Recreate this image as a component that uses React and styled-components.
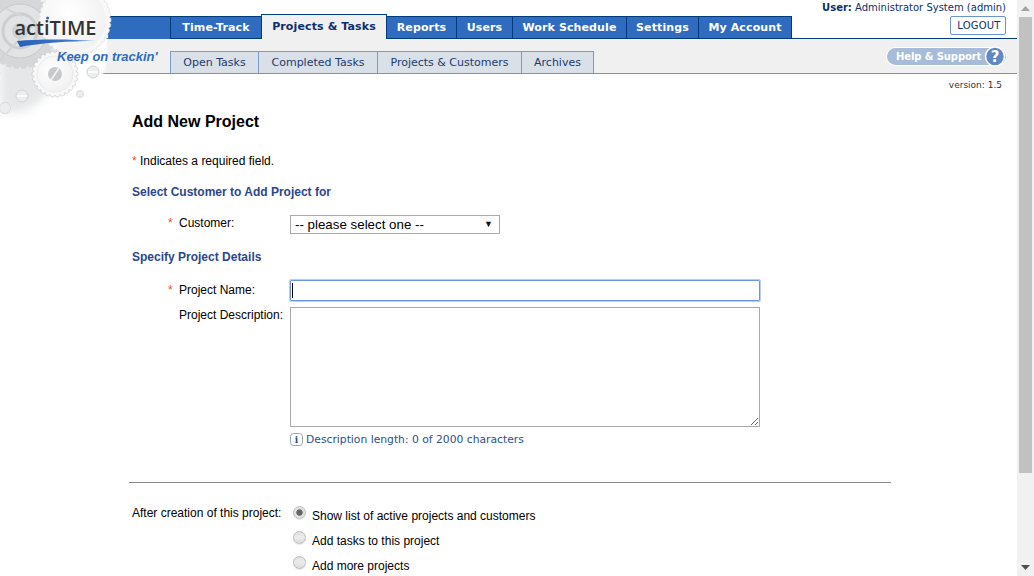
import React from "react";
import styled, { createGlobalStyle } from "styled-components";

const Global = createGlobalStyle`
  html, body { overflow: hidden; }
  body { margin: 0; background: #fff; font-family: "Liberation Sans", Arial, sans-serif; font-size: 12px; color: #000; }
`;

const Page = styled.div`
  position: relative;
  box-sizing: border-box;
  height: 576px;
  padding-right: 17px;
  overflow: hidden;
`;

const Scrollbar = styled.div`
  position: fixed;
  top: 0;
  right: 0;
  bottom: 0;
  width: 17px;
  z-index: 5;
  display: flex;
  flex-direction: column;
  background: #f1f1f1;
`;

const ScrollButton = styled.div`
  height: 17px;
  display: flex;
  align-items: center;
  justify-content: center;
`;

const ScrollTrack = styled.div`
  flex: 1;
  padding: 0 2px;
`;

const ScrollThumb = styled.div`
  height: 456px;
  background: #c1c1c1;
`;

const TopBar = styled.header`
  position: relative;
  height: 39px;
  box-sizing: border-box;
  padding-left: 108px;
  display: flex;
  align-items: flex-end;
  border-bottom: 1px solid #003a7c;
`;

const Nav = styled.nav`
  display: flex;
  align-items: flex-end;
  padding-left: 62px;
  height: 23px;
  margin-bottom: -1px;
  background: #2f6cc0;
  border-top: 1px solid #003a7c;
  box-sizing: border-box;
`;

const Tab = styled.a`
  box-sizing: border-box;
  width: ${p => p.$w}px;
  height: 23px;
  display: flex;
  align-items: center;
  justify-content: center;
  font-family: "DejaVu Sans", Verdana, sans-serif;
  font-weight: bold;
  font-size: 11px;
  letter-spacing: 0.12px;
  color: #fff;
  background: #2f6cc0;
  border: 1px solid #003a7c;
  border-width: 1px 1px 1px ${p => (p.$first ? "1px" : 0)};
`;

const ActiveTab = styled(Tab)`
  height: 25px;
  margin-left: -1px;
  padding-bottom: 1px;
  color: #0d2f6d;
  background: #f0f0f0;
  border-width: 1px 1px 0 1px;
`;

const UserArea = styled.div`
  position: absolute;
  right: 11px;
  top: 2px;
  display: flex;
  flex-direction: column;
  align-items: flex-end;
  gap: 3px;
`;

const UserLine = styled.div`
  font-family: "DejaVu Sans", Verdana, sans-serif;
  font-size: 10px;
  line-height: 11px;
  color: #0d2f6d;
  b { font-weight: bold; }
`;

const Logout = styled.button`
  box-sizing: border-box;
  width: 56px;
  height: 19px;
  padding: 0 0 0 2px;
  background: #fff;
  border: 1px solid #6d94cc;
  border-radius: 2px;
  font-family: "DejaVu Sans", Verdana, sans-serif;
  font-size: 10px;
  letter-spacing: 0.2px;
  color: #0d2f6d;
`;

const SubBar = styled.div`
  position: relative;
  height: 35px;
  box-sizing: border-box;
  background: #f0f0f0;
  border-bottom: 1px solid #6d94cc;
  display: flex;
  align-items: flex-end;
  padding-left: 57px;
`;

const Slogan = styled.div`
  position: relative;
  z-index: 2;
  align-self: flex-start;
  width: 113px;
  margin-top: 9px;
  font: italic bold 13px/17px "Liberation Sans", Arial, sans-serif;
  color: #2f6cc0;
  white-space: nowrap;
`;

const SubTabs = styled.div`
  display: flex;
  height: 22px;
`;

const SubTab = styled.a`
  box-sizing: border-box;
  width: ${p => p.$w}px;
  display: flex;
  align-items: center;
  justify-content: center;
  background: #d9e0e8;
  border: 1px solid #7a9bcf;
  border-width: 1px 1px 0 ${p => (p.$first ? "1px" : 0)};
  font-family: "DejaVu Sans", Verdana, sans-serif;
  font-size: 11px;
  color: #1d3a6e;
`;

const HelpPill = styled.div`
  position: absolute;
  right: 11px;
  top: 9px;
  width: 119px;
  height: 17px;
  box-sizing: border-box;
  padding-left: 9px;
  display: flex;
  align-items: center;
  border-radius: 9px;
  background: #a7bcd9;
  box-shadow: 0 0 0 1px #fff;
  font-family: "DejaVu Sans", Verdana, sans-serif;
  font-weight: bold;
  font-size: 10px;
  letter-spacing: -0.1px;
  color: #fff;
  svg { position: absolute; right: 0; top: -2px; }
`;

const VersionLine = styled.div`
  height: 22px;
  padding-right: 15px;
  text-align: right;
  font-family: "DejaVu Sans", Verdana, sans-serif;
  font-size: 9px;
  line-height: 22px;
  color: #333;
`;

const Main = styled.main`
  width: 762px;
  margin-left: 129px;
`;

const Title = styled.h1`
  margin: 16px 0 0 3px;
  font-size: 16px;
  line-height: 20px;
  font-weight: bold;
`;

const Note = styled.p`
  margin: 22px 0 0 3px;
  font-size: 12px;
  line-height: 14px;
`;

const Star = styled.span`
  color: #e8501e;
`;

const Section = styled.h2`
  margin: ${p => p.$mt}px 0 0 3px;
  font-size: 12px;
  line-height: 14px;
  font-weight: bold;
  color: #2b4690;
`;

const FieldRow = styled.div`
  display: grid;
  grid-template-columns: 161px auto;
  margin-top: ${p => p.$mt}px;
  align-items: start;
`;

const FieldLabel = styled.label`
  display: flex;
  padding-top: ${p => p.$pt || 0}px;
  padding-left: 50px;
  font-size: 12px;
  line-height: 14px;
  white-space: nowrap;
  ${Star} { position: absolute; margin-left: -11px; }
`;

const SelectWrap = styled.div`
  position: relative;
  width: 210px;
  &::after {
    content: "▼";
    position: absolute;
    right: 7px;
    top: 3px;
    font-size: 9px;
    line-height: 12px;
    color: #111;
    pointer-events: none;
  }
`;

const Select = styled.select`
  appearance: none;
  box-sizing: border-box;
  display: block;
  width: 210px;
  height: 19px;
  padding: 0 0 0 4px;
  border: 1px solid #a9a9a9;
  border-radius: 0;
  background: #fff;
  font: 13.333px "Liberation Sans", Arial, sans-serif;
  color: #000;
`;

const InputWrap = styled.div`
  position: relative;
  width: 470px;
`;

const TextInput = styled.input`
  box-sizing: border-box;
  display: block;
  width: 470px;
  height: 21px;
  padding: 0;
  border: 1px solid #6a95e0;
  outline: 1px solid #b7cdf3;
  outline-offset: 0;
  border-radius: 1px;
`;

const Caret = styled.span`
  position: absolute;
  left: 2px;
  top: 3px;
  width: 1px;
  height: 15px;
  background: #000;
`;

const TextArea = styled.textarea`
  box-sizing: border-box;
  display: block;
  width: 470px;
  height: 120px;
  padding: 2px;
  border: 1px solid #a9a9a9;
  border-radius: 0;
  outline: none;
`;

const InfoLine = styled.div`
  display: flex;
  align-items: center;
  gap: 3px;
  margin-top: 6px;
  height: 13px;
  font-family: "DejaVu Sans", Verdana, sans-serif;
  font-size: 10.75px;
  color: #2b5090;
`;

const Rule = styled.hr`
  margin: 36px 0 0;
  border: 0;
  height: 1px;
  background: #888;
`;

const AfterRow = styled.div`
  display: grid;
  grid-template-columns: 161px auto;
  margin-top: 23px;
`;

const AfterLabel = styled.div`
  margin-left: 3px;
  line-height: 14px;
  white-space: nowrap;
`;

const RadioList = styled.div`
  display: flex;
  flex-direction: column;
  gap: 11px;
`;

const RadioRow = styled.label`
  display: flex;
  align-items: flex-start;
  height: 14px;
  line-height: 14px;
  padding-left: 3px;
`;

const Radio = styled.input.attrs({ type: "radio" })`
  appearance: none;
  box-sizing: border-box;
  width: 13px;
  height: 13px;
  margin: 0 6px 0 0;
  border-radius: 50%;
  border: 1px solid #bdbdbd;
  background: ${p =>
    p.defaultChecked
      ? "radial-gradient(circle, #666 0, #666 2.8px, #dedede 3.6px, #eee 100%)"
      : "linear-gradient(#e0e0e0, #ececec 45%, #dcdcdc)"};
  box-shadow: 0 1px 1px rgba(0, 0, 0, 0.1);
`;

const RadioText = styled.span`
  position: relative;
  top: 3px;
`;

const LogoBox = styled.div`
  position: absolute;
  left: 0;
  top: 0;
  width: 130px;
  height: 135px;
  z-index: 1;
  pointer-events: none;
`;

function gearPath(cx, cy, r, teeth, depth) {
  const pts = [];
  const step = (Math.PI * 2) / teeth;
  for (let i = 0; i < teeth; i++) {
    const a = i * step;
    [
      [r - depth, -0.5],
      [r, -0.25],
      [r, 0.25],
      [r - depth, 0.5],
    ].forEach(([rad, o]) => {
      const t = a + o * step;
      pts.push(`${(cx + rad * Math.cos(t)).toFixed(1)} ${(cy + rad * Math.sin(t)).toFixed(1)}`);
    });
  }
  return "M" + pts.join("L") + "Z";
}

function Logo() {
  return (
    <LogoBox>
      <svg width="130" height="135" viewBox="0 0 130 135">
        <defs>
          <filter id="soft" x="-20%" y="-20%" width="140%" height="140%">
            <feGaussianBlur stdDeviation="5" />
          </filter>
          <filter id="softer" x="-20%" y="-20%" width="140%" height="140%">
            <feGaussianBlur stdDeviation="1" />
          </filter>
          <radialGradient id="faceGrad" cx="40%" cy="40%" r="70%">
            <stop offset="0" stopColor="#ffffff" />
            <stop offset="1" stopColor="#f0f0f1" />
          </radialGradient>
          <linearGradient id="swoosh" x1="0" x2="1">
            <stop offset="0" stopColor="#2660b8" />
            <stop offset="0.7" stopColor="#3f78cc" />
            <stop offset="1" stopColor="#a7c1e6" />
          </linearGradient>
        </defs>
        <path d="M0 0H107V50Q109 70 96 84Q82 104 62 112Q34 124 0 112Z" fill="#fff" filter="url(#softer)" />
        <path d="M0 0H70Q74 60 50 90Q30 118 0 112Z" fill="#e6e7e8" filter="url(#soft)" />
        <path d={gearPath(20, 31, 38, 30, 2.5)} fill="#d6d7d8" />
        <circle cx="20" cy="31" r="27" fill="#e2e3e4" stroke="#c8c9ca" />
        <circle cx="20" cy="31" r="17" fill="none" stroke="#cdcecf" strokeWidth="3" />
        <circle cx="20" cy="31" r="8" fill="#cfd0d1" />
        <path d="M0 6L22 16M0 60L36 22" stroke="#d3d4d5" strokeWidth="2" />
        <path d={gearPath(75, 20, 36, 40, 1.6)} fill="#f8f8f8" stroke="#dcdddd" strokeWidth="0.6" />
        <circle cx="75" cy="20" r="31" fill="url(#faceGrad)" />
        <path d={gearPath(55, 74, 23, 26, 2)} fill="#f8f8f8" stroke="#c4c5c6" strokeWidth="0.6" />
        <circle cx="55" cy="74" r="18" fill="url(#faceGrad)" stroke="#dcdddd" strokeWidth="0.5" />
        <circle cx="55" cy="74" r="7" fill="#c8c9cb" />
        <path d="M51 80L59 68" stroke="#f4f4f4" strokeWidth="1.5" />
        <circle cx="93" cy="72" r="6" fill="#ecedee" stroke="#d2d3d4" />
        <path d="M88 72H98" stroke="#fff" strokeWidth="1.6" />
        <circle cx="22" cy="96" r="6" fill="#ecedee" stroke="#d2d3d4" />
        <path d="M17 96H27" stroke="#fff" strokeWidth="1.6" />
        <circle cx="80" cy="94" r="3.5" fill="#ecedee" stroke="#d9dadb" />
        <circle cx="5" cy="108" r="5.5" fill="#ecedee" stroke="#d9dadb" />
        <path d="M17 41C38 39 70 39 96 41C70 41 40 43 20 47Z" fill="url(#swoosh)" />
        <text x="14.5" y="34.5" fontFamily="'Open Sans', sans-serif" fontWeight="600" fontSize="20" fill="#333">
          actiTIME
        </text>
        <circle cx="47.6" cy="18" r="1.5" fill="#2f6cc0" />
      </svg>
    </LogoBox>
  );
}

const navItems = [
  ["Time-Track", 92],
  ["Projects & Tasks", 126, true],
  ["Reports", 70],
  ["Users", 56],
  ["Work Schedule", 114],
  ["Settings", 72],
  ["My Account", 93],
];

const subItems = [
  ["Open Tasks", 89],
  ["Completed Tasks", 119],
  ["Projects & Customers", 144],
  ["Archives", 72],
];

export default function App() {
  return (
    <Page>
      <Global />
      <TopBar>
        <Nav>
          {navItems.map(([label, w, active], i) =>
            active ? (
              <ActiveTab key={label} $w={w}>
                {label}
              </ActiveTab>
            ) : (
              <Tab key={label} $w={w} $first={i === 0}>
                {label}
              </Tab>
            )
          )}
        </Nav>
        <UserArea>
          <UserLine>
            <b>User:</b> Administrator System (admin)
          </UserLine>
          <Logout>LOGOUT</Logout>
        </UserArea>
      </TopBar>
      <SubBar>
        <Slogan>Keep on trackin'</Slogan>
        <SubTabs>
          {subItems.map(([label, w], i) => (
            <SubTab key={label} $w={w} $first={i === 0}>
              {label}
            </SubTab>
          ))}
        </SubTabs>
        <HelpPill>
          Help &amp; Support
          <svg width="22" height="21" viewBox="0 0 22 21">
            <circle cx="11" cy="10.5" r="9.5" fill="#5f88c4" stroke="#fff" strokeWidth="1.6" />
            <text x="11" y="16" textAnchor="middle" fontFamily="'DejaVu Sans', sans-serif" fontWeight="bold" fontSize="15" fill="#fff">
              ?
            </text>
          </svg>
        </HelpPill>
      </SubBar>
      <Logo />
      <VersionLine>version: 1.5</VersionLine>
      <Main>
        <Title>Add New Project</Title>
        <Note>
          <Star>*</Star> Indicates a required field.
        </Note>
        <Section $mt={17}>Select Customer to Add Project for</Section>
        <FieldRow $mt={16}>
          <FieldLabel $pt={1}>
            <Star>*</Star>Customer:
          </FieldLabel>
          <SelectWrap>
            <Select defaultValue="">
              <option value="">-- please select one --</option>
            </Select>
          </SelectWrap>
        </FieldRow>
        <Section $mt={16}>Specify Project Details</Section>
        <FieldRow $mt={16}>
          <FieldLabel $pt={3}>
            <Star>*</Star>Project Name:
          </FieldLabel>
          <InputWrap>
            <TextInput type="text" />
            <Caret />
          </InputWrap>
        </FieldRow>
        <FieldRow $mt={6}>
          <FieldLabel $pt={1}>Project Description:</FieldLabel>
          <div>
            <TextArea />
            <InfoLine>
              <svg width="13" height="13" viewBox="0 0 13 13">
                <rect x="0.5" y="0.5" width="12" height="12" rx="3" fill="#fff" stroke="#9aa3ad" />
                <text x="6.5" y="10" textAnchor="middle" fontFamily="'DejaVu Serif', serif" fontWeight="bold" fontSize="9" fill="#1f4a96">
                  i
                </text>
              </svg>
              Description length: 0 of 2000 characters
            </InfoLine>
          </div>
        </FieldRow>
        <Rule />
        <AfterRow>
          <AfterLabel>After creation of this project:</AfterLabel>
          <RadioList>
            <RadioRow>
              <Radio name="after" defaultChecked />
              <RadioText>Show list of active projects and customers</RadioText>
            </RadioRow>
            <RadioRow>
              <Radio name="after" />
              <RadioText>Add tasks to this project</RadioText>
            </RadioRow>
            <RadioRow>
              <Radio name="after" />
              <RadioText>Add more projects</RadioText>
            </RadioRow>
          </RadioList>
        </AfterRow>
      </Main>
      <Scrollbar>
        <ScrollButton>
          <svg width="9" height="5" viewBox="0 0 9 5">
            <path d="M0 5H9L4.5 0Z" fill="#a3a3a3" />
          </svg>
        </ScrollButton>
        <ScrollTrack>
          <ScrollThumb />
        </ScrollTrack>
        <ScrollButton>
          <svg width="9" height="5" viewBox="0 0 9 5">
            <path d="M0 0H9L4.5 5Z" fill="#505050" />
          </svg>
        </ScrollButton>
      </Scrollbar>
    </Page>
  );
}
